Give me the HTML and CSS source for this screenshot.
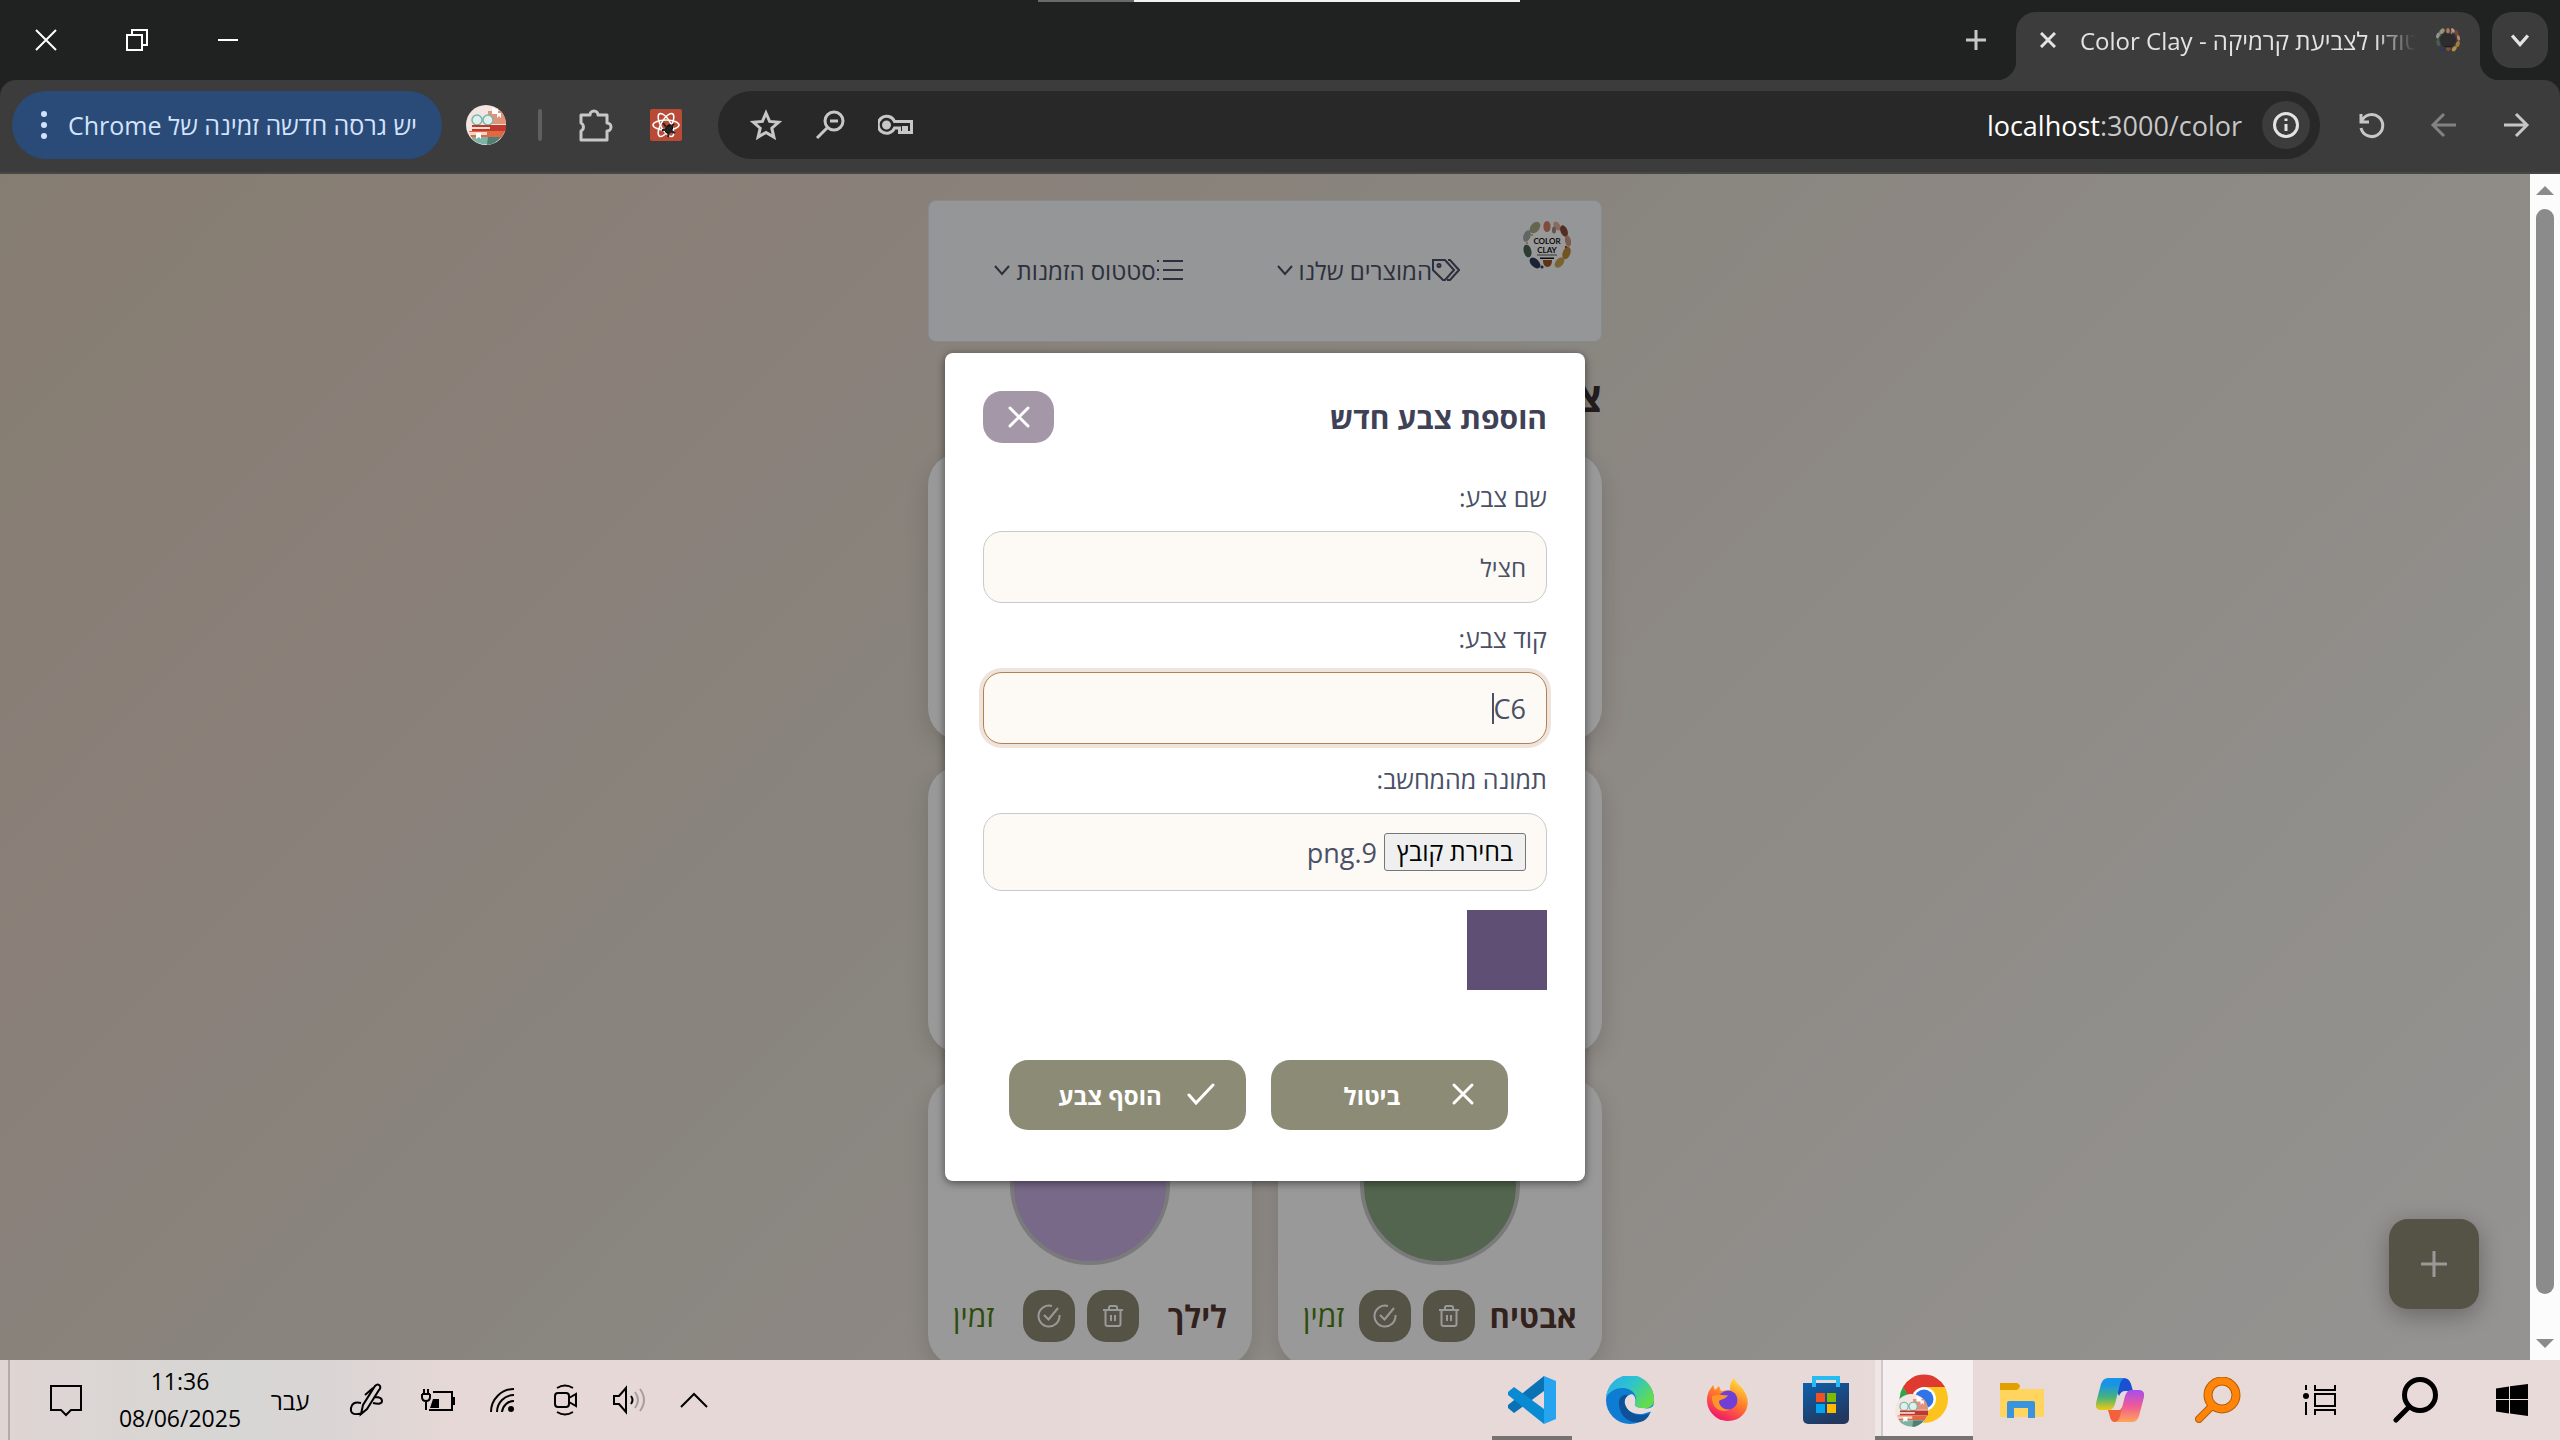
FILE: index.html
```html
<!DOCTYPE html>
<html lang="he">
<head>
<meta charset="utf-8">
<title>Color Clay</title>
<link rel="stylesheet" href="styles.css">
</head>
<body>
<svg class="defs" width="0" height="0" aria-hidden="true">
  <defs>
    <symbol id="x" viewBox="0 0 24 24"><path d="M3 3l18 18M21 3L3 21"/></symbol>
    <symbol id="trash" viewBox="0 0 24 24"><path d="M2 6h20M4.500 6v14a2 2 0 0 0 2 2h11a2 2 0 0 0 2-2V6M8 6V3.500A1.500 1.500 0 0 1 9.500 2h5A1.500 1.500 0 0 1 16 3.500V6M10 11v6M14 11v6"/></symbol>
    <symbol id="check-circle" viewBox="0 0 24 24"><path d="M22.500 11v1A10.500 10.500 0 1 1 15 2M7 11l4.500 4.500L21 4"/></symbol>
    <symbol id="chevron" viewBox="0 0 16 16"><path d="M1 4l7 8 7-8"/></symbol>
    <symbol id="books" viewBox="0 0 40 40">
      <circle cx="20" cy="20" r="20" fill="#f3e6e2"/>
      <path d="M22 6h13a20 20 0 0 1 5 13H22z" fill="#e0927a"/>
      <path d="M26 2l6 3v4h-6z" fill="#fff"/><path d="M31 8h4v5l-2-2-2 2z" fill="#fff"/>
      <circle cx="11" cy="15" r="5" fill="#dff0ec" stroke="#79b5aa" stroke-width="1.500"/><circle cx="22" cy="15" r="5" fill="#dff0ec" stroke="#79b5aa" stroke-width="1.500"/>
      <path d="M6 20h34v6H6z" fill="#bf3a2d"/><path d="M6 22h18v2H6z" fill="#f6ddd2"/>
      <path d="M3 26h36l-3 6H5z" fill="#dd6a45"/><path d="M3 27h18v3H4z" fill="#f2d5c6"/>
      <path d="M6 32h29a20 20 0 0 1-29 2z" fill="#7cb3a5"/><path d="M22 32h13a20 20 0 0 1-14 8z" fill="#4f7e73"/><path d="M10 28h5v6l-2-2-3 2z" fill="#fff"/>
    </symbol>
    <symbol id="drops" viewBox="0 0 48 48">
      <g stroke="none">
        <ellipse cx="24" cy="5.500" rx="3.600" ry="5.500" fill="#d88163"/><ellipse cx="12" cy="6.500" rx="4.400" ry="6.500" fill="#a9aa86" transform="rotate(38 12 6.500)"/>
        <ellipse cx="34" cy="5" rx="3" ry="5" fill="#e3b39a" transform="rotate(-30 34 5)"/><ellipse cx="41" cy="10" rx="3.500" ry="6" fill="#8e4a37" transform="rotate(-22 41 10)"/>
        <ellipse cx="4" cy="15" rx="3.500" ry="6" fill="#a3aba4" transform="rotate(20 4 15)"/><ellipse cx="45" cy="20" rx="3" ry="5.500" fill="#cf9880" transform="rotate(-12 45 20)"/>
        <ellipse cx="4.500" cy="30" rx="3.800" ry="6.500" fill="#4a6450" transform="rotate(-15 4.500 30)"/><ellipse cx="43.500" cy="32" rx="3.800" ry="6.500" fill="#bf8c33" transform="rotate(20 43.500 32)"/>
        <ellipse cx="12" cy="42" rx="4" ry="6.500" fill="#2c3b58" transform="rotate(-45 12 42)"/><ellipse cx="36.500" cy="41.500" rx="3.800" ry="6" fill="#caa653" transform="rotate(40 36.500 41.500)"/>
        <path d="M20 39h9q0 7-4.500 7T20 39z" fill="#9a5428"/><path d="M17 36.500h14v1.500H17z" fill="#111"/>
        <ellipse cx="31" cy="9" rx="2" ry="3.500" fill="#a18c80"/><circle cx="9" cy="14" r="1" fill="#caa653"/><circle cx="19" cy="46" r="1.500" fill="#2c3b58"/><circle cx="43" cy="26" r="1.200" fill="#8e4a37"/><circle cx="4" cy="22" r="1" fill="#caa653"/>
      </g>
    </symbol>
  </defs>
</svg>

<header class="tabstrip">
  <span class="load-line"></span>
  <div class="win-controls">
    <button aria-label="close window"><svg width="22" height="22" viewBox="0 0 22 22"><path d="M1 1l20 20M21 1L1 21"/></svg></button>
    <button aria-label="restore window"><svg width="22" height="22" viewBox="0 0 22 22"><path d="M1 6h15v15H1zM6 6V1h15v15h-5"/></svg></button>
    <button aria-label="minimize window"><svg width="22" height="22" viewBox="0 0 22 22"><path d="M1 11h20"/></svg></button>
  </div>
  <button class="new-tab" aria-label="new tab"><svg width="20" height="20" viewBox="0 0 20 20"><path d="M0 10h20M10 0v20"/></svg></button>
  <div class="tab">
    <button aria-label="close tab"><svg width="16" height="16" viewBox="0 0 16 16"><path d="M1 1l14 14M15 1L1 15"/></svg></button>
    <div class="tab-title"><span dir="rtl">סטודיו לצביעת קרמיקה - Color Clay</span></div>
    <svg class="favicon" width="24" height="24" viewBox="0 0 48 48"><circle cx="24" cy="24" r="16" fill="#2a2a2a" stroke="none"/><use href="#drops"/></svg>
  </div>
  <button class="tab-search" aria-label="search tabs"><svg width="18" height="18"><use href="#chevron"/></svg></button>
</header>

<div class="toolbar">
  <button class="update"><svg width="8" height="30" viewBox="0 0 8 30"><circle cx="4" cy="4" r="3"/><circle cx="4" cy="15" r="3"/><circle cx="4" cy="26" r="3"/></svg><span dir="rtl">יש גרסה חדשה זמינה של Chrome</span></button>
  <svg class="avatar" width="40" height="40"><use href="#books"/></svg>
  <span class="divider"></span>
  <svg class="puzzle line" width="36" height="36" viewBox="0 0 36 36"><path d="M4 8h9a4 4 0 0 1 8 0h9v8a4 4 0 0 1 0 8v9H4v-9a4.500 4.500 0 0 0 0-8z" stroke-linejoin="round"/></svg>
  <svg width="32" height="32" viewBox="0 0 32 32"><rect width="32" height="32" rx="2" fill="#b94a36" stroke="none"/><g fill="none" stroke="#fff" stroke-width="1.500"><ellipse cx="16" cy="16" rx="13" ry="5"/><ellipse cx="16" cy="16" rx="13" ry="5" transform="rotate(60 16 16)"/><ellipse cx="16" cy="16" rx="13" ry="5" transform="rotate(120 16 16)"/></g><ellipse cx="19" cy="20" rx="3" ry="4.500" fill="#222" transform="rotate(30 19 20)"/><path d="M13 14l4 5M24 15l-5 4M12 21l6 0M18 28l1-6M25 24l-6-3" stroke="#222" stroke-width="2"/></svg>
  <div class="omnibox">
    <svg class="line" width="32" height="32" viewBox="0 0 32 32"><path d="M16 4l3.600 8.400 9.100.8-6.900 6 2.100 8.900L16 23.400l-7.900 4.700 2.100-8.900-6.900-6 9.100-.8z"/></svg>
    <svg class="line" width="32" height="32" viewBox="0 0 32 32"><circle cx="20" cy="12" r="9"/><path d="M16 12h8M13.500 18.500L3 29"/></svg>
    <svg class="line" width="36" height="32" viewBox="2 0 36 32"><path d="M18.500 12.500H35.500v11h-5v-5h-3v5h-4v-4.500h-5a8.500 8.500 0 1 1 0-6.500z"/><circle cx="10.500" cy="16" r="3" fill="#c7c7c7"/></svg>
    <div class="url" dir="ltr"><a href="#page"><b>localhost</b>:3000/color</a></div>
    <span class="info"><svg width="28" height="28" viewBox="0 0 28 28"><circle cx="14" cy="14" r="11.500"/><path d="M14 13v7M14 7.500v2.500"/></svg></span>
  </div>
  <div class="nav-buttons">
    <button aria-label="reload"><svg class="line" width="28" height="28" viewBox="0 0 28 28"><path d="M3 3v8h8M3.500 10.500A11 11 0 1 1 3 17"/></svg></button>
    <button aria-label="forward" class="off"><svg class="line" width="28" height="28" viewBox="0 0 28 28"><path d="M26 14H3M14 3L3 14l11 11"/></svg></button>
    <button aria-label="back"><svg class="line" width="28" height="28" viewBox="0 0 28 28"><path d="M2 14h23M14 3l11 11-11 11"/></svg></button>
  </div>
</div>

<main class="viewport">
  <div class="page" id="page" dir="rtl">
    <div class="content">
      <nav class="site-nav">
        <svg class="logo" width="48" height="48" viewBox="0 0 48 48" direction="ltr"><circle cx="24" cy="24" r="20" fill="#fff" stroke="none"/><use href="#drops"/><path d="M14 34h20" stroke="#555" stroke-width="1"/><text x="24" y="23" text-anchor="middle">COLOR</text><text x="24" y="32" text-anchor="middle">CLAY</text></svg>
        <a href="#p" class="products"><svg width="28" height="22" viewBox="0 0 28 22"><path d="M1 1h12l9 10-9 10h-2L1 11zM16 1h2l9 10-9 10h-3"/><circle cx="7" cy="6.500" r="1.500"/></svg><span>המוצרים שלנו</span><svg class="chev" width="16" height="16"><use href="#chevron"/></svg></a>
        <a href="#o"><svg width="28" height="22" viewBox="0 0 28 22"><path d="M7 2h20M7 11h20M7 20h20M1 2h2M1 11h2M1 20h2"/></svg><span>סטטוס הזמנות</span><svg class="chev" width="16" height="16"><use href="#chevron"/></svg></a>
      </nav>
      <h1>צבעים</h1>
      <div class="cards">
        <article class="card"></article><article class="card"></article>
        <article class="card"></article><article class="card"></article>
        <article class="card">
          <div class="blob green"></div>
          <div class="row"><h2>אבטיח</h2><div class="acts"><button aria-label="מחיקה"><svg width="24" height="24"><use href="#trash"/></svg></button><button aria-label="אישור"><svg width="24" height="24"><use href="#check-circle"/></svg></button></div><span class="ok">זמין</span></div>
        </article>
        <article class="card">
          <div class="blob lilac"></div>
          <div class="row"><h2>לילך</h2><div class="acts"><button aria-label="מחיקה"><svg width="24" height="24"><use href="#trash"/></svg></button><button aria-label="אישור"><svg width="24" height="24"><use href="#check-circle"/></svg></button></div><span class="ok">זמין</span></div>
        </article>
      </div>
    </div>
    <button class="fab" aria-label="הוספה"><svg width="26" height="26" viewBox="0 0 26 26"><path d="M1 13h24M13 1v24"/></svg></button>
    <div class="overlay">
      <form class="modal">
        <div class="modal-head"><h3>הוספת צבע חדש</h3><button type="button" class="close" aria-label="סגירה"><svg width="24" height="24"><use href="#x"/></svg></button></div>
        <div class="field"><label for="name">שם צבע:</label><input id="name" type="text" value="חציל"></div>
        <div class="field"><label for="code">קוד צבע:</label><input id="code" class="focused" type="text" value="C6"><span class="caret"></span></div>
        <div class="field"><label for="file">תמונה מהמחשב:</label><label class="file" for="file"><input id="file" type="file"><span class="pick">בחירת קובץ</span><span class="file-name">9.png</span></label></div>
        <div class="preview"></div>
        <div class="modal-foot">
          <button type="button"><svg class="cross" width="28" height="28" viewBox="0 0 28 28"><path d="M5 4l18 18M23 4L5 22"/></svg><span>ביטול</span></button>
          <button type="submit"><svg width="28" height="28" viewBox="0 0 28 28"><path d="M2 14l7 8L26 4"/></svg><span>הוסף צבע</span></button>
        </div>
      </form>
    </div>
  </div>
  <div class="scrollbar"><i class="up"></i><i class="thumb"></i><i class="down"></i></div>
</main>

<footer class="taskbar">
  <div class="tray">
    <button class="wide" aria-label="notifications"><svg width="34" height="34" viewBox="0 0 34 34"><path d="M2 3h30v24H22l-5 5-5-5H2z"/></svg></button>
    <div class="clock"><span>11:36</span><span>08/06/2025</span></div>
    <span class="lang">עבר</span>
    <button class="wide" aria-label="pen"><svg width="34" height="34" viewBox="0 0 34 34"><path d="M12 31l2-9L26 3q3-3 5 0 1 2-1 4L18 26zM24 5l-8 7M12 20q-9-2-10 5t7 6q4 0 5-3M26 14q7 0 7 4t-9 2"/></svg></button>
    <button aria-label="battery"><svg width="34" height="26" viewBox="0 0 34 26"><path d="M12 5h19v18H8M33 10v8M1 7h8M3 2v5M7 2v5M1 7v3q0 4 4 4t4-4V7M5 14v9"/><path class="solid" d="M12 12h6v9h-9z"/></svg></button>
    <button aria-label="wifi"><svg width="26" height="26" viewBox="0 0 26 26"><path d="M2 25A23 23 0 0 1 25 2M8 25A17 17 0 0 1 25 8M13 25A12 12 0 0 1 25 14"/><circle class="solid" cx="22" cy="22" r="3"/></svg></button>
    <button aria-label="meet"><svg width="28" height="32" viewBox="0 0 28 32"><rect x="3" y="9" width="14" height="14" rx="3"/><path d="M17 14l7-4v12l-7-4M5 4q8-5 16 0M5 28q8 5 16 0"/></svg></button>
    <button aria-label="sound"><svg width="34" height="30" viewBox="0 0 34 30"><path d="M1 11h5l7-8v24l-7-8H1zM18 11q3 4 0 8"/><path d="M22 7q6 8 0 16M27 4q8 11 0 22" stroke="#a89d9d"/></svg></button>
    <button aria-label="more"><svg width="28" height="16" viewBox="0 0 28 16"><path d="M1 15L14 2l13 13"/></svg></button>
  </div>
  <div class="apps">
    <button class="running" aria-label="Code"><svg width="48" height="48" viewBox="0 0 48 48"><path d="M36 0v15L6 37l-6-5v-3z" fill="#0a71b5"/><path d="M0 16l6-5 30 22v15L0 19z" fill="#0b8ad4"/><path d="M36 0l12 5v38l-12 5z" fill="#27a4f0"/></svg></button>
    <button aria-label="Edge"><svg width="48" height="48" viewBox="0 0 48 48"><defs><linearGradient id="eg" x1="0" y1="0" x2="1" y2=".6"><stop offset="0" stop-color="#2fa9ee"/><stop offset=".5" stop-color="#2cc3d0"/><stop offset="1" stop-color="#63dc4d"/></linearGradient></defs><circle cx="24" cy="24" r="24" fill="#0d7cd2"/><path d="M0 22A24 24 0 0 1 48 24c0 6-5 9-11 8-6 0-9-2-8-4 4-8-3-16-12-16C8 12 2 17 0 22z" fill="url(#eg)"/><path d="M26 18c-9 2-10 11-4 16s14 5 21 2l5-1v-6c-2 3-6 4-11 3-6 0-9-2-8-4 1-3 1-8-3-10z" fill="#e9dcdc"/><path d="M13 27c0 12 9 21 21 19 5-1 8-4 10-9-10 5-22 1-25-9-1-4 1-7 3-9-6-1-9 3-9 8z" fill="#0e5199"/></svg></button>
    <button aria-label="Firefox"><svg width="44" height="48" viewBox="0 0 44 48"><defs><linearGradient id="ff" x1=".8" y1="0" x2=".3" y2="1"><stop offset="0" stop-color="#ffe83c"/><stop offset=".5" stop-color="#ff7a2a"/><stop offset="1" stop-color="#f0126f"/></linearGradient></defs><path d="M22 45A21 21 0 0 1 3 15l4-6 2 5 4-4 2 5 9-1c0-6 1-9 4-12 2 6 8 8 10 13 9 13 1 30-16 30z" fill="url(#ff)"/><circle cx="22" cy="24" r="9.500" fill="#6f3fd8"/><path d="M6 20c6-2 12 0 16-1-2 4-6 4-9 6 0 6 6 10 12 8-12 6-20-3-19-13z" fill="#ff9428"/></svg></button>
    <button aria-label="Store"><svg width="46" height="48" viewBox="0 0 46 48"><defs><linearGradient id="st" x1="0" y1="0" x2=".5" y2="1"><stop offset="0" stop-color="#0d61af"/><stop offset="1" stop-color="#22385f"/></linearGradient></defs><path d="M0 7h46v36a5 5 0 0 1-5 5H5a5 5 0 0 1-5-5z" fill="url(#st)"/><path d="M11 11V2h24v9" class="handle"/><path d="M13 17h9v9h-9z" fill="#f25022"/><path d="M24 17h9v9h-9z" fill="#7fba00"/><path d="M13 28h9v9h-9z" fill="#00a4ef"/><path d="M24 28h9v9h-9z" fill="#ffb900"/></svg></button>
    <button class="active" aria-label="Chrome"><svg width="54" height="54" viewBox="0 0 54 54"><circle cx="29" cy="25" r="24" fill="#fcc31e"/><path d="M8 13A24 24 0 0 1 50 13H29L18 31z" fill="#df3a2f"/><path d="M8 13l11 18 10 6-5 12A24 24 0 0 1 8 13z" fill="#2da44e"/><circle cx="29" cy="25" r="12" fill="#fff"/><circle cx="29" cy="25" r="9.500" fill="#2f74e8"/><use href="#books" x="0" y="20" width="33" height="33"/></svg></button>
    <button aria-label="Explorer"><svg width="44" height="38" viewBox="0 0 44 38"><path d="M0 3h17l4 5h23v26q0 2-2 2H0z" fill="#ffd45f"/><path d="M0 2h17q3 1 3 4l-3 3H0z" fill="#dfa000"/><path d="M7 37V22q0-2 2-2h24q2 0 2 2v15h-7V27H14v10z" fill="#3a93dd"/></svg></button>
    <button aria-label="Copilot"><svg width="48" height="44" viewBox="0 0 48 44"><defs><linearGradient id="c1" x1="0" y1="0" x2="0" y2="1"><stop offset=".2" stop-color="#1794e8"/><stop offset=".6" stop-color="#46b37b"/><stop offset="1" stop-color="#f2c811"/></linearGradient><linearGradient id="c2" x1="0" y1="0" x2="0" y2="1"><stop offset="0" stop-color="#a64df0"/><stop offset=".5" stop-color="#ee5a96"/><stop offset="1" stop-color="#ffa457"/></linearGradient></defs><path d="M14 0h14q5 0 7 6l2 7h-8q-4 0-6 5z" fill="#1a50d2"/><path d="M12 32h12l6-8-3 20h-8q-4 0-5-5z" fill="#f2603c"/><path d="M12 0h17q-4 1-5 6l-5 20q-2 6-6 6H5q-6 0-5-7L5 6q2-6 7-6z" fill="url(#c1)"/><path d="M36 44H19q4-1 5-6l5-20q2-6 6-6h8q6 0 5 7l-5 19q-2 6-7 6z" fill="url(#c2)"/></svg></button>
    <button aria-label="search tool"><svg width="46" height="46" viewBox="0 0 46 46"><g fill="none" stroke-linecap="round"><path d="M15 31L4 42" stroke="#b55c08" stroke-width="8"/><circle cx="27" cy="18" r="14" stroke="#b55c08" stroke-width="9"/><path d="M17 29L4 42" stroke="#ff8408" stroke-width="6"/><circle cx="27" cy="18" r="14" stroke="#ff8408" stroke-width="7"/></g></svg></button>
    <button class="sys first" aria-label="task view"><svg width="34" height="32" viewBox="0 0 34 32"><path d="M3 1v5M3 18v13M12 1v5h20V1M12 31v-5h20v5M12 10h20v12H12z"/><circle class="solid" cx="3" cy="12" r="3"/></svg></button>
    <button class="sys" aria-label="search"><svg width="46" height="46" viewBox="0 0 46 46"><circle cx="27" cy="18" r="15.500" stroke-width="5"/><path d="M16 30L3 43" stroke-width="5" stroke-linecap="round"/></svg></button>
    <button class="sys" aria-label="start"><svg width="32" height="32" viewBox="0 0 32 32"><path class="solid" d="M0 4.500L13 2.500V15H0zM14 2.300L32 0v15H14zM0 16h13v13.500L0 27.500zM14 16h18v16l-18-2.500z"/></svg></button>
  </div>
</footer>
</body>
</html>
```
FILE: styles.css
```css
* { box-sizing: border-box; }
html, body { height: 100%; margin: 0; }
body {
  display: flex;
  flex-direction: column;
  overflow: hidden;
  font-family: "Open Sans", "Noto Sans", sans-serif;
  font-size: 24px;
}
button {
  border: 0;
  padding: 0;
  background: none;
  font: inherit;
  color: inherit;
  display: flex;
  align-items: center;
  justify-content: center;
}
a { color: inherit; text-decoration: none; }
svg { display: block; flex: none; fill: none; stroke: currentColor; }
.defs { position: absolute; }
.avatar, .apps svg { stroke: none; }
.line { stroke: #c7c7c7; stroke-width: 3; }
.solid { fill: #000; stroke: none; }

/* window title bar and tabs */
.tabstrip {
  position: relative;
  z-index: 1;
  display: flex;
  align-items: center;
  flex: none;
  height: 80px;
  padding-right: 12px;
  background: #202221;
  color: #fff;
}
.load-line {
  position: absolute;
  top: 0;
  left: 1038px;
  width: 482px;
  height: 2px;
  background: linear-gradient(90deg, #6a6a6a 20%, #f2f2f2 20%);
}
.win-controls { display: flex; flex: 1; }
.win-controls button { width: 91px; height: 80px; stroke-width: 2; }
.new-tab { width: 80px; color: #c7c7c7; stroke-width: 3; }
.tab {
  position: relative;
  display: flex;
  align-items: center;
  align-self: flex-end;
  width: 464px;
  height: 68px;
  padding: 0 20px 12px 24px;
  border-radius: 20px 20px 0 0;
  background: #3c3c3c;
  color: #e3e3e3;
  stroke-width: 3;
}
.tab::before, .tab::after {
  content: "";
  position: absolute;
  bottom: 0;
  width: 20px;
  height: 20px;
}
.tab::before { right: 100%; background: radial-gradient(circle at 0 0, transparent 20px, #3c3c3c 21px); }
.tab::after { left: 100%; background: radial-gradient(circle at 100% 0, transparent 20px, #3c3c3c 21px); }
.tab-title {
  display: flex;
  flex: 1;
  min-width: 0;
  margin: 0 20px 0 24px;
  overflow: hidden;
  white-space: nowrap;
  font-size: 24px;
  -webkit-mask-image: linear-gradient(90deg, #000 88%, transparent);
}
.tab-title span { flex: none; }
.favicon { opacity: .8; }
.tab-search {
  width: 56px;
  height: 56px;
  margin-left: 12px;
  border-radius: 20px;
  background: #3c3c3c;
  color: #e3e3e3;
  stroke-width: 3;
}

/* address bar row */
.toolbar {
  display: flex;
  align-items: center;
  flex: none;
  height: 94px;
  padding: 0 8px 2px 12px;
  border-bottom: 2px solid #474747;
  border-radius: 16px 16px 0 0;
  background: #3c3c3c;
  box-shadow: 0 -16px 0 #202221;
}
.update {
  justify-content: flex-start;
  gap: 20px;
  width: 430px;
  height: 68px;
  padding-left: 28px;
  border-radius: 34px;
  background: #2a4a77;
  color: #d3e3fd;
  font-size: 25px;
  white-space: nowrap;
}
.update svg { fill: #d3e3fd; stroke: none; }
.avatar { margin-left: 24px; }
.divider { width: 4px; height: 32px; margin: 0 35px 0 32px; border-radius: 2px; background: #5f5f5f; }
.puzzle { margin-right: 37px; }
.omnibox {
  display: flex;
  align-items: center;
  flex: 1;
  gap: 32px;
  height: 68px;
  margin-left: 36px;
  padding: 0 10px 0 32px;
  border-radius: 34px;
  background: #282828;
}
.url { flex: 1; text-align: right; color: #c7c7c7; font-size: 27px; }
.url b { color: #fff; font-weight: 400; }
.info {
  display: flex;
  align-items: center;
  justify-content: center;
  width: 48px;
  height: 48px;
  margin-left: -12px;
  border-radius: 50%;
  background: #3c3c3c;
  color: #e3e3e3;
  stroke-width: 3;
}
.nav-buttons { display: flex; margin-left: 16px; }
.nav-buttons button { width: 72px; height: 72px; }
.off { opacity: .5; }

/* browser viewport */
.viewport { display: flex; flex: 1; min-height: 0; }
.page {
  position: relative;
  flex: 1;
  overflow: hidden;
  background: linear-gradient(135deg, #e0d0bd 0%, #e6d5ca 22%, #e4ddd2 42%, #ece4dd 58%, #f0ece5 75%, #f8f6f3 100%);
}
.content { width: 674px; margin: 0 auto; padding-top: 26px; }
.site-nav {
  display: flex;
  height: 142px;
  padding: 20px 30px;
  border: 1px solid #e2e8f0;
  border-radius: 8px;
  background: #f8fafc;
  color: #4a5065;
}
.site-nav a { display: flex; align-items: center; height: 98px; margin-right: 93px; font-size: 24px; stroke-width: 2; }
.site-nav a.products { margin-right: 63px; }
.site-nav .chev { margin-right: 6px; }
.logo text { fill: #111; stroke: none; font: 700 8px Lato, sans-serif; }
.content h1 { margin: 24px 0 25px; font-size: 40px; line-height: 62px; color: #3a3030; }
.cards { display: grid; grid-template-columns: 1fr 1fr; gap: 26px; }
.card {
  height: 287px;
  padding: 26px 25px 24px;
  border-radius: 32px;
  background: #fff;
  box-shadow: 0 8px 24px rgba(0, 0, 0, .15);
}
.blob { width: 160px; height: 160px; margin: 0 auto 25px; border: 4px solid #ccc; border-radius: 50%; }
.green { background: #8aa882; }
.lilac { background: #c8afe4; }
.row { display: flex; align-items: center; justify-content: space-between; height: 52px; }
.row h2 { margin: 0; font-size: 31px; line-height: 50px; color: #54382f; }
.acts { display: flex; gap: 12px; }
.acts button {
  width: 52px;
  height: 52px;
  border-radius: 19px;
  background: #8c8b75;
  color: #fff;
  stroke-width: 2;
}
.ok { font-size: 30px; line-height: 50px; color: #4d8012; }
.fab {
  position: absolute;
  right: 51px;
  bottom: 51px;
  width: 90px;
  height: 90px;
  border-radius: 19px;
  background: #8c8b75;
  color: #fff;
  stroke-width: 3;
  stroke-linecap: round;
  box-shadow: 0 6px 24px rgba(0, 0, 0, .3);
}

/* dialog */
.overlay {
  position: absolute;
  inset: 0;
  display: flex;
  align-items: center;
  justify-content: center;
  background: rgba(0, 0, 0, .4);
}
.modal {
  width: 640px;
  padding: 38px 38px 51px;
  border-radius: 8px;
  background: #fff;
  box-shadow: 0 2px 8px rgba(0, 0, 0, .5);
  color: #4a5065;
}
.modal-head { display: flex; align-items: center; justify-content: space-between; height: 52px; margin-bottom: 38px; }
.modal-head h3 { margin: 0; font-size: 30px; color: #3f4257; }
.close { width: 71px; height: 52px; border-radius: 19px; background: #a497a8; color: #fff; stroke-width: 3; stroke-linecap: round; }
.field { position: relative; display: flex; flex-direction: column; gap: 18px; margin-bottom: 19px; }
.field label { font-size: 25px; line-height: 32px; }
.field input[type=text], .field .file {
  height: 72px;
  padding: 0 20px;
  border: 1px solid #c9cacb;
  border-radius: 19px;
  background: #fdfaf5;
  color: #4a5065;
  font: 24px "Open Sans", "Noto Sans", sans-serif;
  outline: none;
}
.field input.focused { border: 1px solid #b5804f; box-shadow: 0 0 0 4px #efe4db; caret-color: transparent; font-size: 27px; }
.caret { position: absolute; right: 53px; bottom: 20px; width: 2px; height: 31px; background: #4a5065; }
.field .file { display: flex; align-items: center; gap: 7px; height: 78px; }
.file input { position: absolute; width: 1px; height: 1px; opacity: 0; }
.file-name { font-size: 27px; }
.pick {
  height: 38px;
  padding: 0 12px;
  border: 1px solid #767676;
  border-radius: 3px;
  background: #efefef;
  color: #000;
  font-size: 25px;
  line-height: 34px;
}
.preview { width: 80px; height: 80px; background: #5f4f75; }
.modal-foot { display: flex; gap: 25px; margin-top: 70px; padding-right: 39px; }
.modal-foot button {
  width: 237px;
  height: 70px;
  padding: 0 31px 0 24px;
  border-radius: 19px;
  background: #8c8b75;
  color: #fff;
  font-weight: 700;
  stroke-width: 3;
  stroke-linecap: round;
}
.modal-foot span { flex: 1; text-align: center; white-space: nowrap; }

/* page scrollbar */
.scrollbar {
  display: flex;
  flex-direction: column;
  align-items: center;
  width: 30px;
  padding: 12px 0;
  background: #fcfcfc;
}
.scrollbar i { border: 9px solid transparent; }
.scrollbar .up { border-top: 0; border-bottom-color: #8b8b8b; }
.scrollbar .down { border-bottom: 0; border-top-color: #8b8b8b; }
.scrollbar .thumb { flex: 1; width: 18px; margin: 14px 0 45px; border: 0; border-radius: 9px; background: #8b8b8b; }

/* taskbar */
.taskbar {
  display: flex;
  justify-content: space-between;
  flex: none;
  height: 80px;
  background: linear-gradient(90deg, #dfd5d3 0, #d6d6d4 9%, #dad5d4 13%, #e6d8d6 18%, #e8dad9 100%);
  color: #000;
}
.tray { display: flex; align-items: center; margin-left: 8px; padding-left: 16px; border-left: 2px solid #b3aaa9; stroke-width: 2; }
.tray button { width: 64px; }
.tray .wide { width: 80px; }
.clock { display: flex; flex-direction: column; align-items: center; width: 148px; font-size: 23px; line-height: 37px; }
.lang { width: 72px; text-align: center; font-size: 24px; }
.apps { display: flex; }
.apps button { width: 98px; height: 80px; }
.apps .sys { width: 96px; }
.apps .sys svg { stroke: #000; stroke-width: 2; }
.apps .sys .solid { stroke: none; }
.apps .first { margin-left: 5px; }
.handle { fill: none; stroke: #27bbf0; stroke-width: 4; }
.apps .running { background: linear-gradient(#767272, #767272) center bottom / 80px 4px no-repeat; }
.apps .active {
  padding: 6px 4px 0 0;
  border-bottom: 4px solid #767272;
  background: linear-gradient(90deg, #efe6e6 6px, #d3c8c8 6px, #d3c8c8 8px, #f5efef 8px);
}
```
